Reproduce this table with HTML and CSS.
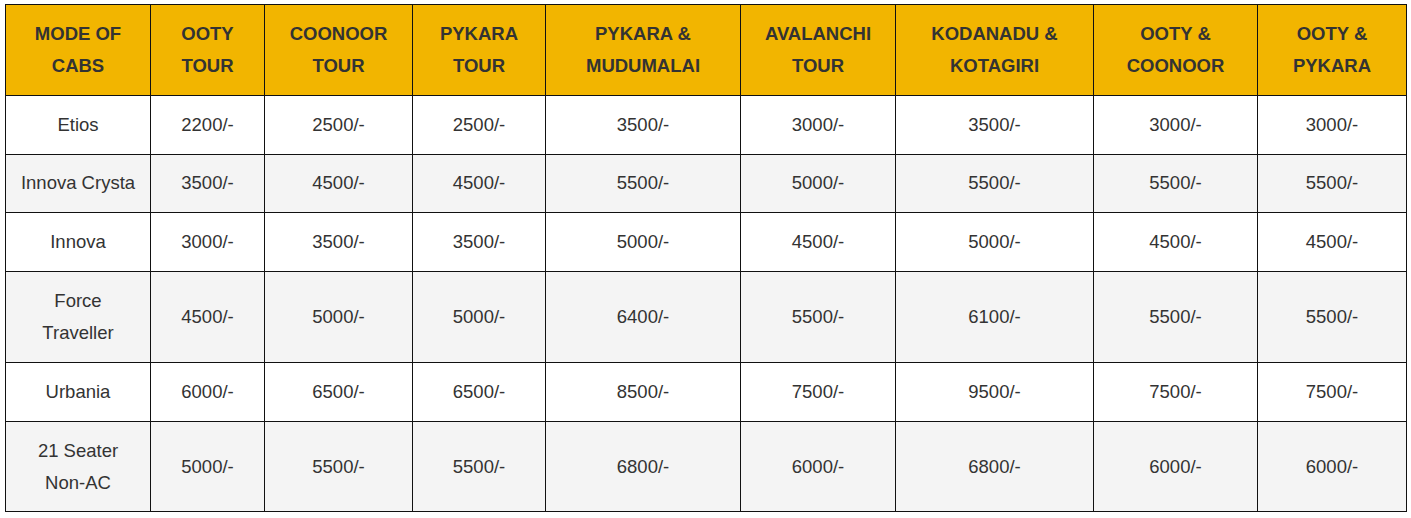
FILE: index.html
```html
<!DOCTYPE html>
<html lang="en">
<head>
<meta charset="utf-8">
<title>Cab Tariff</title>
<link rel="stylesheet" href="styles.css">
</head>
<body>
<div class="wrap">
<table class="tariff">
  <colgroup>
    <col class="c1"><col class="c2"><col class="c3"><col class="c4"><col class="c5"><col class="c6"><col class="c7"><col class="c8"><col class="c9">
  </colgroup>
  <thead>
    <tr>
      <th>MODE OF<br>CABS</th>
      <th>OOTY<br>TOUR</th>
      <th>COONOOR<br>TOUR</th>
      <th>PYKARA<br>TOUR</th>
      <th>PYKARA &amp;<br>MUDUMALAI</th>
      <th>AVALANCHI<br>TOUR</th>
      <th>KODANADU &amp;<br>KOTAGIRI</th>
      <th>OOTY &amp;<br>COONOOR</th>
      <th>OOTY &amp;<br>PYKARA</th>
    </tr>
  </thead>
  <tbody>
    <tr><td>Etios</td><td>2200/-</td><td>2500/-</td><td>2500/-</td><td>3500/-</td><td>3000/-</td><td>3500/-</td><td>3000/-</td><td>3000/-</td></tr>
    <tr><td>Innova Crysta</td><td>3500/-</td><td>4500/-</td><td>4500/-</td><td>5500/-</td><td>5000/-</td><td>5500/-</td><td>5500/-</td><td>5500/-</td></tr>
    <tr><td>Innova</td><td>3000/-</td><td>3500/-</td><td>3500/-</td><td>5000/-</td><td>4500/-</td><td>5000/-</td><td>4500/-</td><td>4500/-</td></tr>
    <tr><td>Force<br>Traveller</td><td>4500/-</td><td>5000/-</td><td>5000/-</td><td>6400/-</td><td>5500/-</td><td>6100/-</td><td>5500/-</td><td>5500/-</td></tr>
    <tr><td>Urbania</td><td>6000/-</td><td>6500/-</td><td>6500/-</td><td>8500/-</td><td>7500/-</td><td>9500/-</td><td>7500/-</td><td>7500/-</td></tr>
    <tr><td>21 Seater<br>Non-AC</td><td>5000/-</td><td>5500/-</td><td>5500/-</td><td>6800/-</td><td>6000/-</td><td>6800/-</td><td>6000/-</td><td>6000/-</td></tr>
  </tbody>
</table>
</div>
</body>
</html>
```

FILE: styles.css
```css
html, body {
  margin: 0;
  padding: 0;
  background: #ffffff;
}

.wrap {
  padding: 4px 0 0 5px;
}

.tariff {
  border-collapse: collapse;
  table-layout: fixed;
  width: 1401px;
  font-family: "Liberation Sans", Arial, sans-serif;
  font-size: 18.5px;
  line-height: 32px;
  color: #333333;
}

.c1 { width: 145px; }
.c2 { width: 114px; }
.c3 { width: 148px; }
.c4 { width: 133px; }
.c5 { width: 195px; }
.c6 { width: 155px; }
.c7 { width: 198px; }
.c8 { width: 164px; }
.c9 { width: 149px; }

.tariff th,
.tariff td {
  border: 1px solid #111111;
  padding: 12.9px 4px;
  text-align: center;
  vertical-align: middle;
}

.tariff th {
  background: #f2b500;
  font-weight: bold;
  color: #333333;
}

.tariff tbody tr:nth-child(even) td {
  background: #f4f4f4;
}
```
